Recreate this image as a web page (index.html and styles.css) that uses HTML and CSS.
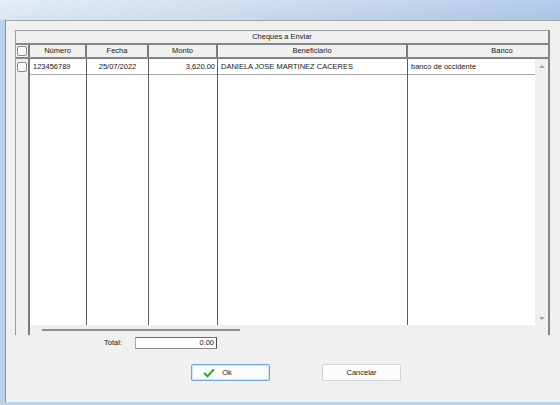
FILE: index.html
```html
<!DOCTYPE html>
<html>
<head>
<meta charset="utf-8">
<link rel="stylesheet" href="styles.css">
</head>
<body>
<div class="window">
  <div class="titlebar"></div>
  <div class="frame">
    <div class="form">
      <div class="grid">
        <div class="grid-title">Cheques a Enviar</div>
        <div class="grid-head">
          <div class="hcell c-chk"><span class="chk"></span></div>
          <div class="hcell c-num">Número</div>
          <div class="hcell c-fecha">Fecha</div>
          <div class="hcell c-monto">Monto</div>
          <div class="hcell c-benef">Beneficiario</div>
          <div class="hcell c-banco-h">Banco</div>
        </div>
        <div class="grid-body">
          <div class="rowhead">
            <div class="rh-cell"><span class="chk"></span></div>
          </div>
          <div class="data">
            <div class="col c-num"><div class="cell left">123456789</div></div>
            <div class="col c-fecha"><div class="cell center">25/07/2022</div></div>
            <div class="col c-monto"><div class="cell right">3,620.00</div></div>
            <div class="col c-benef"><div class="cell left">DANIELA JOSE MARTINEZ CACERES</div></div>
            <div class="col c-banco"><div class="cell left">banco de occidente</div></div>
          </div>
          <div class="vscroll">
            <span class="arrow-up"></span>
            <span class="arrow-down"></span>
          </div>
          <div class="hscroll"><div class="thumb"></div></div>
          <div class="corner"></div>
        </div>
      </div>
      <div class="total-row">
        <span class="total-label">Total:</span>
        <div class="total-input">0.00</div>
      </div>
      <div class="buttons">
        <div class="btn btn-ok">
          <svg class="check" width="12" height="10" viewBox="0 0 12 10"><path d="M1.2 5 L4.5 8.3 L10.8 1.3" fill="none" stroke="#22a022" stroke-width="1.9"/></svg>
          <span>Ok</span>
        </div>
        <div class="btn btn-cancel"><span>Cancelar</span></div>
      </div>
    </div>
  </div>
</div>
</body>
</html>
```
FILE: styles.css
```css
* { box-sizing: border-box; }
html, body { margin: 0; padding: 0; }
body {
  width: 560px;
  height: 405px;
  overflow: hidden;
  font-family: "Liberation Sans", Arial, sans-serif;
  font-size: 7.5px;
  color: #161616;
}
.window {
  width: 560px;
  height: 405px;
  display: flex;
  flex-direction: column;
}
.titlebar {
  height: 20px;
  flex: none;
  background: linear-gradient(172deg, #e4edf7 0%, #cddcee 45%, #a9c5e6 100%);
}
.frame {
  flex: 1;
  display: flex;
  background: #bcd3ee;
  padding-left: 5px;
  padding-bottom: 3px;
}
.form {
  flex: 1;
  background: #f0f0f0;
  border-top: 1px solid #a3a3a3;
  border-left: 1px solid #8e8e8e;
  padding: 9px 0 0 9px;
  display: flex;
  flex-direction: column;
}
.grid {
  width: 535px;
  height: 305px;
  border: 1px solid #a0a0a0;
  border-right: 2px solid #858585;
  border-bottom: 2px solid #858585;
  display: flex;
  flex-direction: column;
  background: #f0f0f0;
}
.grid-title {
  height: 14px;
  line-height: 12px;
  text-align: center;
  border-bottom: 2px solid #858585;
}
.grid-head {
  height: 12px;
  display: flex;
  border-bottom: 2px solid #858585;
  box-sizing: content-box;
}
.hcell {
  height: 12px;
  line-height: 11px;
  text-align: center;
  border-right: 2px solid #7a7a7a;
  white-space: nowrap;
  overflow: hidden;
}
.c-chk { width: 14px; display: flex; align-items: center; justify-content: center; padding-right: 1px; }
.c-num { width: 57px; }
.c-fecha { width: 62px; }
.c-monto { width: 69px; }
.c-benef { width: 190px; }
.c-banco-h { width: 140px; border-right: none; padding-left: 48px; }
.c-banco { width: 127px; }
.chk {
  display: block;
  width: 10px;
  height: 10px;
  border: 1px solid #8a8a8a;
  border-radius: 2px;
  background: #fafafa;
}
.grid-body {
  flex: 1;
  display: grid;
  grid-template-columns: 14px 505px 13px;
  grid-template-rows: 266px 10px;
}
.rowhead {
  grid-row: 1 / 3;
  border-right: 2px solid #7a7a7a;
  background: #f0f0f0;
}
.rh-cell {
  height: 16px;
  display: flex;
  align-items: center;
  justify-content: center;
  padding-right: 1px;
}
.data {
  display: flex;
  background: #fff;
}
.col {
  height: 100%;
  border-right: 1px solid #5e5e5e;
}
.col.c-banco { border-right: none; }
.cell {
  height: 16px;
  line-height: 15px;
  border-bottom: 1px solid #a8a8a8;
  white-space: nowrap;
  overflow: hidden;
}
.left { padding-left: 3px; }
.center { text-align: center; }
.right { text-align: right; padding-right: 2px; }
.vscroll {
  background: #f0f0f0;
  display: flex;
  flex-direction: column;
  align-items: center;
  justify-content: space-between;
  padding: 6px 0 5px;
}
.arrow-up {
  width: 0; height: 0;
  border-left: 3px solid transparent;
  border-right: 3px solid transparent;
  border-bottom: 3px solid #a6a6a6;
}
.arrow-down {
  width: 0; height: 0;
  border-left: 3px solid transparent;
  border-right: 3px solid transparent;
  border-top: 3px solid #a6a6a6;
}
.hscroll {
  background: #f0f0f0;
  padding-top: 4px;
}
.thumb {
  margin-left: 12px;
  width: 198px;
  height: 2px;
  background: #8e8e8e;
}
.corner { background: #f0f0f0; }
.total-row {
  display: flex;
  align-items: center;
  margin-top: 2px;
  height: 12px;
}
.total-label {
  margin-left: 89px;
  width: 31px;
  line-height: 12px;
}
.total-input {
  width: 82px;
  height: 12px;
  line-height: 10px;
  background: #fff;
  border: 1px solid #a6a6a6;
  border-top-color: #6e6e6e;
  border-bottom-color: #8a8a8a;
  border-right: 1px solid #4e4e4e;
  text-align: right;
  padding-right: 2px;
}
.buttons {
  display: flex;
  margin-top: 15px;
  padding-left: 176px;
  gap: 52px;
}
.btn {
  width: 79px;
  height: 17px;
  display: flex;
  align-items: center;
  justify-content: center;
  border-radius: 2px;
  background: #fcfcfc;
  line-height: 15px;
}
.btn-ok {
  border: 1px solid #6ea3dc;
  box-shadow: inset 0 0 0 1px #cfe2f6;
  gap: 7px;
  padding-right: 26px;
}
.check { display: block; }
.btn-cancel {
  border: 1px solid #d2d2d2;
}
```
